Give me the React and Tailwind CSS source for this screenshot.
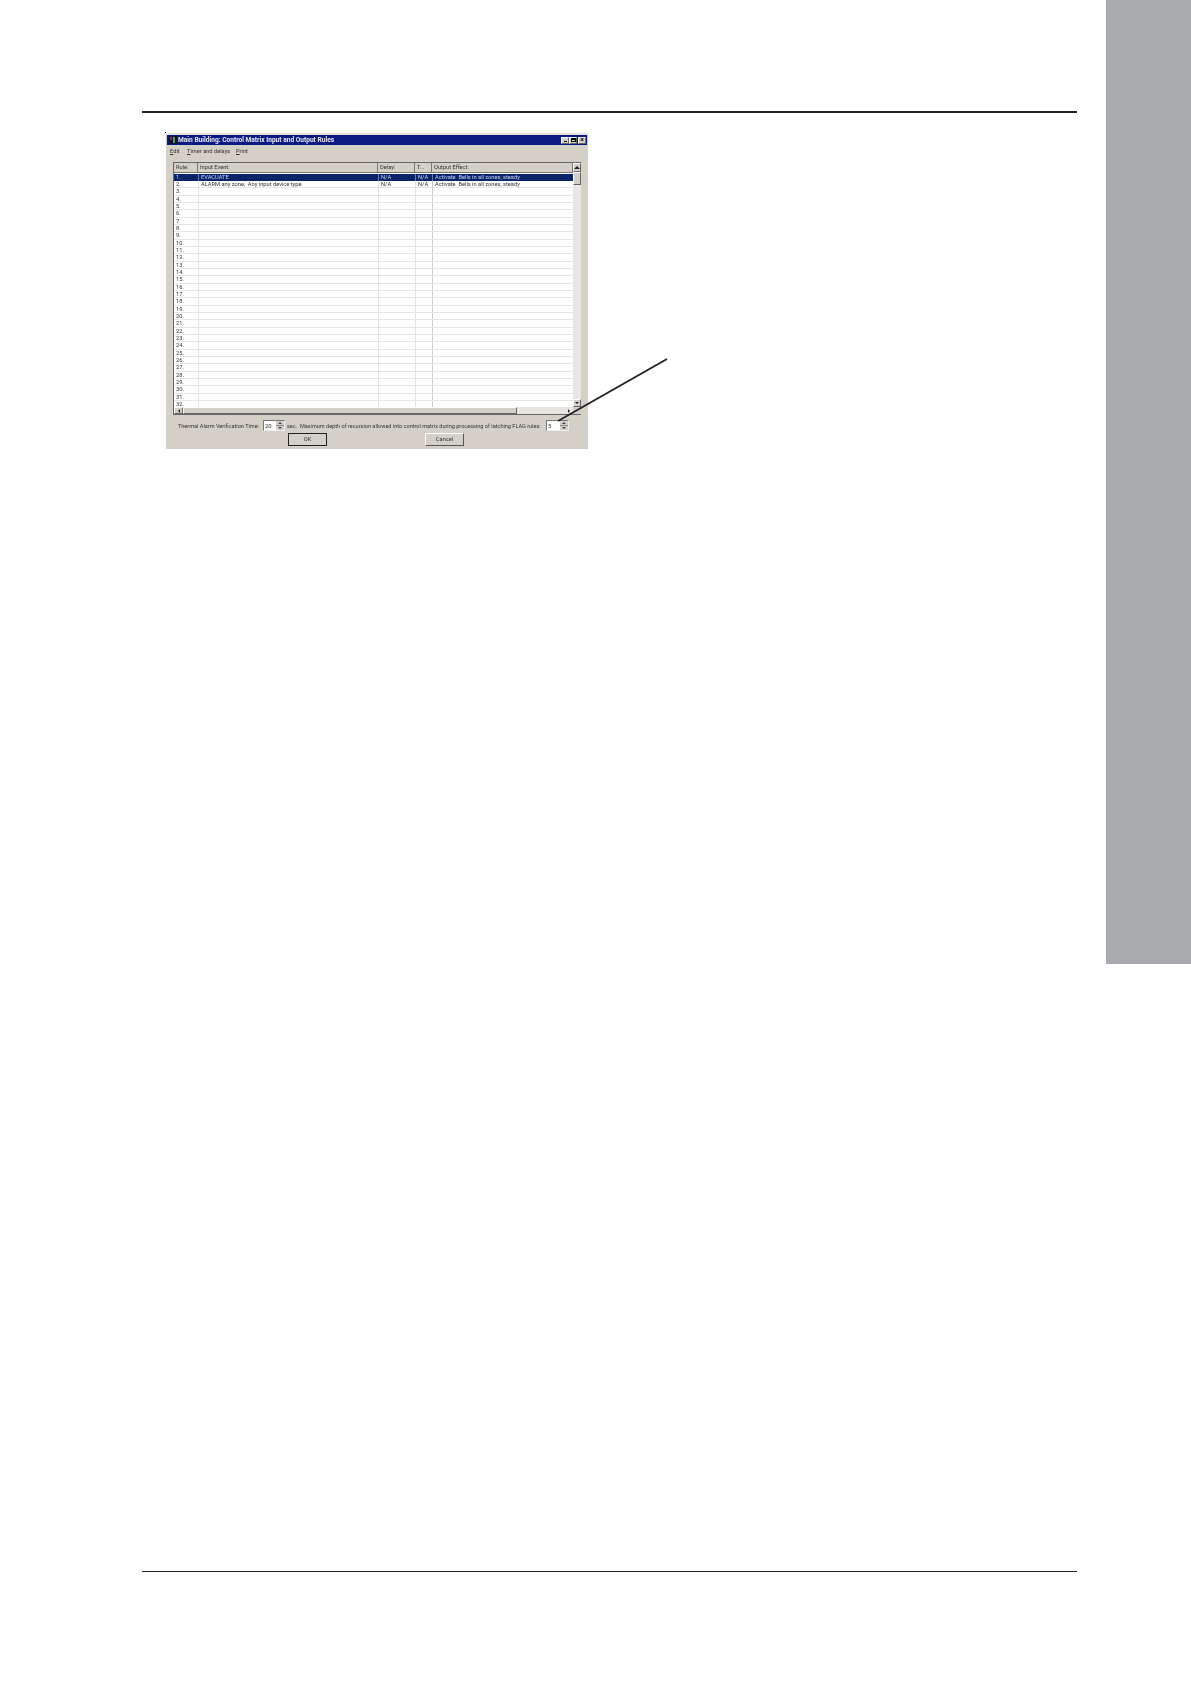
import React from 'react';

const rowNumbers = Array.from({ length: 32 }, (_, i) => i + 1);

const rowText = {
  1: { input: 'EVACUATE', delay: 'N/A', type: 'N/A', output: 'Activate  Bells in all zones; steady' },
  2: { input: 'ALARM any zone,  Any input device type', delay: 'N/A', type: 'N/A', output: 'Activate  Bells in all zones; steady' },
};

const Raised = ({ className = '', children }) => (
  <div className={`bg-[#d4d0c8] border border-t-white border-l-white border-r-[#666] border-b-[#666] flex items-center justify-center ${className}`}>
    {children}
  </div>
);

const Arrow = ({ dir }) => {
  const points = { up: '0,4 3,1 6,4', down: '1,2 3,4 5,2', left: '4,1 2,3 4,5', right: '2,1 4,3 2,5' };
  return (
    <svg width="6" height="6" viewBox="0 0 6 6">
      <polygon points={points[dir]} fill="#222" />
    </svg>
  );
};

const Spinner = ({ value, className }) => (
  <div className={`h-[11px] shrink-0 bg-white border border-t-[#777] border-l-[#777] border-r-[#eee] border-b-[#eee] flex justify-between ${className}`}>
    <span className="pl-[1px] leading-[9px] text-[6px]">{value}</span>
    <div className="w-[8px] flex flex-col">
      <div className="h-1/2 bg-[#d4d0c8] flex items-center justify-center border-b border-[#888]">
        <svg width="4" height="2" viewBox="0 0 4 2"><polygon points="0,2 2,0 4,2" fill="#444" /></svg>
      </div>
      <div className="h-1/2 bg-[#d4d0c8] flex items-center justify-center">
        <svg width="4" height="2" viewBox="0 0 4 2"><polygon points="0,0 2,2 4,0" fill="#444" /></svg>
      </div>
    </div>
  </div>
);

const Dialog = () => (
  <div className="w-[422px] h-[316px] bg-[#d4d0c8] border-t-2 border-[#e4e2dd] px-[1px] text-[5.7px] leading-[7px] text-[#333] font-['Roboto',sans-serif] blur-[0.3px]">
    <div className="h-[10px] bg-[#0a1a80] flex items-center justify-between pl-[2px] pr-[1px]">
      <div className="flex items-center gap-[1px]">
        <svg width="8" height="8" viewBox="0 0 8 8">
          <rect width="8" height="8" fill="#101030" />
          <rect x="1" y="1" width="2" height="3" fill="#a03030" />
          <rect x="4" y="1" width="2" height="6" fill="#50a050" />
        </svg>
        <span className="font-bold text-[#e8e8f4] text-[6.6px] whitespace-nowrap">Main Building: Control Matrix Input and Output Rules</span>
      </div>
      <div className="flex">
        <Raised className="w-[8px] h-[7px] items-end pb-[1px]"><span className="block w-[3px] h-[1px] bg-black" /></Raised>
        <Raised className="w-[8px] h-[7px]"><span className="block w-[5px] h-[4px] border border-t-2 border-black" /></Raised>
        <Raised className="w-[8px] h-[7px] ml-[1px] text-[7px] text-black font-bold">×</Raised>
      </div>
    </div>

    <div className="h-[13px] flex items-center pl-[3px] whitespace-nowrap">
      <span className="w-[17px]"><span className="underline">E</span>dit</span>
      <span className="w-[49px]"><span className="underline">T</span>imer and delays</span>
      <span><span className="underline">P</span>rint</span>
    </div>

    <div className="mt-[4px] ml-[6px] w-[408px] h-[253px] flex border-t border-l border-[#666] bg-white">
      <div className="flex-1 min-w-0 flex flex-col">
        <div className="h-[10px] grid grid-cols-[24px_180px_37px_17px_1fr] bg-[#d4d0c8] shrink-0">
          {['Rule:', 'Input Event:', 'Delay:', 'T...', 'Output Effect:'].map((label) => (
            <div key={label} className="pl-[2px] flex items-center border-r border-b border-[#777]">{label}</div>
          ))}
        </div>
        <div className="flex-1 min-h-0 overflow-hidden pt-[0.5px]">
          {rowNumbers.map((n) => {
            const row = rowText[n] || {};
            const selected = n === 1;
            return (
              <div
                key={n}
                className={`h-[7.35px] grid grid-cols-[24px_180px_37px_17px_1fr] leading-[6px] ${
                  selected ? 'bg-[#0a246a] text-[#c8d4f4]' : 'border-b border-[#e6e6e2]'
                }`}
              >
                <div className="pl-[2px] whitespace-nowrap">{n}.</div>
                <div className={`pl-[2px] whitespace-pre border-l ${selected ? 'border-[#6a7ab0]' : 'border-[#e2e2de]'}`}>{row.input}</div>
                <div className={`pl-[2px] border-l ${selected ? 'border-[#6a7ab0]' : 'border-[#e2e2de]'}`}>{row.delay}</div>
                <div className={`pl-[2px] border-l ${selected ? 'border-[#6a7ab0]' : 'border-[#e2e2de]'}`}>{row.type}</div>
                <div className={`pl-[2px] whitespace-pre border-l ${selected ? 'border-[#6a7ab0]' : 'border-[#ccc]'}`}>{row.output}</div>
              </div>
            );
          })}
        </div>
        <div className="h-[8px] flex bg-[#e8e6e1] shrink-0 border-b border-[#666]">
          <Raised className="w-[9px]"><Arrow dir="left" /></Raised>
          <Raised className="w-[334px]" />
          <div className="flex-1" />
          <div className="w-[8px] flex items-center justify-center"><Arrow dir="right" /></div>
        </div>
      </div>
      <div className="w-[8px] flex flex-col bg-[#e8e6e1] shrink-0">
        <Raised className="h-[9px] shrink-0"><Arrow dir="up" /></Raised>
        <Raised className="h-[13px] shrink-0" />
        <div className="flex-1" />
        <Raised className="h-[8px] shrink-0"><Arrow dir="down" /></Raised>
        <div className="h-[8px] shrink-0 bg-[#d4d0c8] border-b border-[#666]" />
      </div>
    </div>

    <div className="mt-[5px] ml-[11px] h-[11px] flex items-center whitespace-pre text-[5.55px]">
      <span className="w-[85px] pt-[1px]">Thermal Alarm Verification Time:</span>
      <Spinner value="20" className="w-[22px]" />
      <span className="ml-[2px] w-[259px] pt-[1px]">sec.  Maximum depth of recursion allowed into control matrix during processing of latching FLAG rules:</span>
      <Spinner value="5" className="w-[23px]" />
    </div>

    <div className="mt-[2px] ml-[121px] flex gap-[98px]">
      <div className="w-[39px] h-[13px] flex items-center justify-center border border-[#222] bg-[#d4d0c8]">OK</div>
      <div className="w-[39px] h-[13px] flex items-center justify-center border border-t-white border-l-white border-r-[#555] border-b-[#555]">Cancel</div>
    </div>
  </div>
);

export default function App() {
  return (
    <div className="h-[1684px] flex bg-white">
      <div className="flex-1 flex flex-col pl-[142px] pr-[29px] pt-[111px]">
        <div className="h-[2px] bg-[#222]" />
        <div className="relative mt-[20px] ml-[24px] w-[422px]">
          <span className="absolute -left-[1px] -top-[1px] w-[1px] h-[1px] bg-black" />
          <Dialog />
          <svg className="absolute left-[380px] top-[222px]" width="130" height="72" viewBox="0 0 130 72">
            <line x1="121" y1="4" x2="12" y2="66" stroke="#222" strokeWidth="1.9" />
          </svg>
        </div>
        <div className="flex-1" />
        <div className="h-[1px] bg-[#222] mb-[112px]" />
      </div>
      <div className="w-[85px] h-[964px] bg-[#a9aaad]" />
    </div>
  );
}
